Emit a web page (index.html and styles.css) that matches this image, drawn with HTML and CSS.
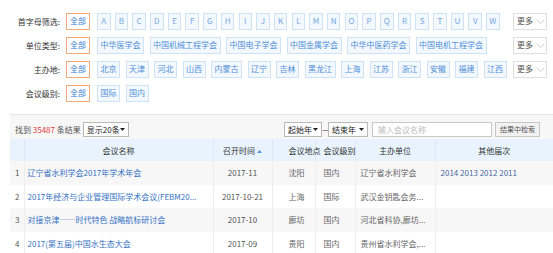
FILE: index.html
```html
<!DOCTYPE html>
<html lang="zh-CN">
<head>
<meta charset="utf-8">
<title>会议检索</title>
<link rel="stylesheet" href="styles.css">
</head>
<body>
<div class="page">
  <div class="filters">
    <div class="frow">
      <span class="flabel">首字母筛选:</span>
      <div class="opts letters">
        <span class="opt all">全部</span>
        <span class="opt ltr">A</span><span class="opt ltr">B</span><span class="opt ltr">C</span><span class="opt ltr">D</span><span class="opt ltr">E</span><span class="opt ltr">F</span><span class="opt ltr">G</span><span class="opt ltr">H</span><span class="opt ltr">I</span><span class="opt ltr">J</span><span class="opt ltr">K</span><span class="opt ltr">L</span><span class="opt ltr">M</span><span class="opt ltr">N</span><span class="opt ltr">O</span><span class="opt ltr">P</span><span class="opt ltr">Q</span><span class="opt ltr">R</span><span class="opt ltr">S</span><span class="opt ltr">T</span><span class="opt ltr">U</span><span class="opt ltr">V</span><span class="opt ltr">W</span>
      </div>
      <span class="more">更多<svg class="chev" width="9" height="5" viewBox="0 0 9 5"><polyline points="0.5,0.5 4.5,4.5 8.5,0.5" fill="none" stroke="#c4c4c4" stroke-width="0.9"/></svg></span>
    </div>
    <div class="frow">
      <span class="flabel">单位类型:</span>
      <div class="opts">
        <span class="opt all">全部</span>
        <span class="opt">中华医学会</span>
        <span class="opt">中国机械工程学会</span>
        <span class="opt">中国电子学会</span>
        <span class="opt">中国金属学会</span>
        <span class="opt">中华中医药学会</span>
        <span class="opt">中国电机工程学会</span>
      </div>
      <span class="more">更多<svg class="chev" width="9" height="5" viewBox="0 0 9 5"><polyline points="0.5,0.5 4.5,4.5 8.5,0.5" fill="none" stroke="#c4c4c4" stroke-width="0.9"/></svg></span>
    </div>
    <div class="frow">
      <span class="flabel">主办地:</span>
      <div class="opts">
        <span class="opt all">全部</span>
        <span class="opt">北京</span><span class="opt">天津</span><span class="opt">河北</span><span class="opt">山西</span><span class="opt">内蒙古</span><span class="opt">辽宁</span><span class="opt">吉林</span><span class="opt">黑龙江</span><span class="opt">上海</span><span class="opt">江苏</span><span class="opt">浙江</span><span class="opt">安徽</span><span class="opt">福建</span><span class="opt">江西</span>
      </div>
      <span class="more">更多<svg class="chev" width="9" height="5" viewBox="0 0 9 5"><polyline points="0.5,0.5 4.5,4.5 8.5,0.5" fill="none" stroke="#c4c4c4" stroke-width="0.9"/></svg></span>
    </div>
    <div class="frow">
      <span class="flabel">会议级别:</span>
      <div class="opts">
        <span class="opt all">全部</span>
        <span class="opt">国际</span><span class="opt">国内</span>
      </div>
    </div>
  </div>

  <div class="bar">
    <span class="found">找到 <em class="num">35487</em> 条结果</span>
    <span class="sel sel-page">显示20条<svg class="caret" width="5" height="3" viewBox="0 0 5 3"><polygon points="0,0 5,0 2.5,3" fill="#222"/></svg></span>
    <div class="search">
      <span class="sel sel-year">起始年<svg class="caret" width="5" height="3" viewBox="0 0 5 3"><polygon points="0,0 5,0 2.5,3" fill="#222"/></svg></span>
      <span class="dash">—</span>
      <span class="sel sel-year2">结束年<svg class="caret" width="5" height="3" viewBox="0 0 5 3"><polygon points="0,0 5,0 2.5,3" fill="#222"/></svg></span>
      <span class="input">输入会议名称</span>
      <span class="btn">结果中检索</span>
    </div>
  </div>

  <table class="results">
    <colgroup>
      <col class="c-no"><col class="c-name"><col class="c-date"><col class="c-place"><col class="c-level"><col class="c-org"><col class="c-other">
    </colgroup>
    <thead>
      <tr>
        <th></th>
        <th class="center">会议名称</th>
        <th class="center">召开时间 <svg class="sort" width="5" height="3" viewBox="0 0 5 3"><polygon points="0,3 5,3 2.5,0" fill="#4f94dd"/></svg></th>
        <th class="place">会议地点</th>
        <th class="level">会议级别</th>
        <th class="center">主办单位</th>
        <th class="center">其他届次</th>
      </tr>
    </thead>
    <tbody>
      <tr>
        <td class="no">1</td>
        <td class="name"><a>辽宁省水利学会2017年学术年会</a></td>
        <td class="date">2017-11</td>
        <td class="place">沈阳</td>
        <td class="level">国内</td>
        <td class="org">辽宁省水利学会</td>
        <td class="other"><a>2014</a> <a>2013</a> <a>2012</a> <a>2011</a></td>
      </tr>
      <tr>
        <td class="no">2</td>
        <td class="name"><a>2017年经济与企业管理国际学术会议(FEBM20...</a></td>
        <td class="date">2017-10-21</td>
        <td class="place">上海</td>
        <td class="level">国际</td>
        <td class="org">武汉金钥匙会务...</td>
        <td class="other"></td>
      </tr>
      <tr>
        <td class="no">3</td>
        <td class="name"><a>对接京津——时代特色 战略航标研讨会</a></td>
        <td class="date">2017-10</td>
        <td class="place">廊坊</td>
        <td class="level">国内</td>
        <td class="org">河北省科协,廊坊...</td>
        <td class="other"></td>
      </tr>
      <tr>
        <td class="no">4</td>
        <td class="name"><a>2017(第五届)中国水生态大会</a></td>
        <td class="date">2017-09</td>
        <td class="place">贵阳</td>
        <td class="level">国内</td>
        <td class="org">贵州省水利学会,...</td>
        <td class="other"></td>
      </tr>
    </tbody>
  </table>
</div>
</body>
</html>
```

FILE: styles.css
```css
html, body {
  margin: 0;
  padding: 0;
  background: #fff;
}
body {
  width: 553px;
  height: 253px;
  overflow: hidden;
  font-family: "Noto Sans CJK SC", "Noto Sans", sans-serif;
  font-size: 8px;
  color: #333;
}
.page {
  padding-left: 10px;
}

/* filters */
.filters {
  padding: 9px 0;
  border-bottom: 1px solid #e6e6e6;
}
.frow {
  display: flex;
  align-items: center;
  height: 24px;
}
.flabel {
  width: 56px;
  box-sizing: border-box;
  padding-right: 6px;
  text-align: right;
  color: #333;
  white-space: nowrap;
}
.opts {
  display: flex;
  align-items: center;
}
.opt {
  height: 17px;
  box-sizing: border-box;
  border: 1px solid #cfe3f6;
  background: #f2f8fe;
  color: #4f8fd8;
  padding: 0 2.5px;
  margin-right: 5.5px;
  display: flex;
  align-items: center;
  justify-content: center;
  white-space: nowrap;
  line-height: 1;
}
.opt.all {
  width: 24px;
  border-color: #f4a878;
  background: #fff;
  color: #3d7fd6;
  margin-right: 7px;
}
.letters .opt.ltr {
  width: 13.5px;
  padding: 0;
  margin-right: 4.2px;
  color: #77a8e0;
}
.more {
  margin-left: auto;
  margin-right: 6px;
  width: 34px;
  height: 17px;
  box-sizing: border-box;
  border: 1px solid #dedede;
  background: #fff;
  color: #555;
  display: flex;
  align-items: center;
  padding-left: 3px;
  gap: 3px;
  line-height: 1;
}
.chev {
  display: block;
}

/* result bar */
.bar {
  display: flex;
  align-items: flex-end;
  height: 24px;
  box-sizing: border-box;
  padding: 0 0 2px 5px;
  background: #f7f7f7;
}
.found {
  color: #555;
  height: 15px;
  display: flex;
  align-items: center;
  white-space: pre;
  margin-right: 2px;
}
.num {
  font-style: normal;
  color: #e23b3b;
}
.sel {
  height: 15px;
  box-sizing: border-box;
  border: 1px solid #b9b9b9;
  background: #fff;
  color: #222;
  display: flex;
  align-items: center;
  justify-content: space-between;
  padding: 0 3px;
  line-height: 1;
  white-space: nowrap;
  flex-shrink: 0;
}
.sel-page {
  width: 46px;
}
.sel-year {
  width: 38px;
}
.sel-year2 {
  width: 40px;
}
.caret {
  display: block;
  flex-shrink: 0;
}
.search {
  margin-left: auto;
  margin-right: 13px;
  display: flex;
  align-items: center;
}
.dash {
  width: 6px;
  text-align: center;
  color: #333;
  line-height: 15px;
  overflow: hidden;
}
.input {
  width: 120px;
  height: 15px;
  box-sizing: border-box;
  border: 1px solid #c8c8c8;
  background: #fff;
  color: #bbb;
  margin-left: 4px;
  padding-left: 5px;
  display: flex;
  align-items: center;
  line-height: 1;
  flex-shrink: 0;
}
.btn {
  width: 45px;
  height: 15px;
  box-sizing: border-box;
  border: 1px solid #c6c6c6;
  background: #f2f2f2;
  color: #555;
  margin-left: 3px;
  font-size: 7px;
  display: flex;
  align-items: center;
  justify-content: center;
  line-height: 1;
  white-space: nowrap;
  flex-shrink: 0;
}

/* table */
.results {
  width: 543px;
  table-layout: fixed;
  border-collapse: collapse;
}
.c-no { width: 14px; }
.c-name { width: 189px; }
.c-date { width: 59px; }
.c-place { width: 43px; }
.c-level { width: 40px; }
.c-org { width: 80px; }
.c-other { width: 118px; }

.results th {
  height: 22px;
  padding: 0;
  background: #e8f3fd;
  font-weight: normal;
  color: #333;
  text-align: left;
  border-right: 1px solid #dbe9f6;
  white-space: nowrap;
}
.results th:last-child {
  border-right: none;
}
.results th.center {
  text-align: center;
}
.sort {
  vertical-align: 1px;
}
.results td {
  height: 23.5px;
  padding: 0;
  color: #666;
  white-space: nowrap;
  overflow: hidden;
  border-right: 1px solid #eeeeee;
}
.results td:last-child {
  border-right: none;
}
.results tbody tr:nth-child(odd) td {
  background: #f7f7f7;
}
.results td.no {
  padding-left: 5px;
  color: #555;
}
.results td.name {
  padding-left: 3px;
}
.results a {
  color: #3571c4;
  text-decoration: none;
}
.results td.date {
  text-align: center;
  color: #555;
}
.results .place {
  padding-left: 16px;
}
.results .level {
  padding-left: 8px;
}
.results td.org {
  padding-left: 5px;
}
.results td.other {
  padding-left: 5px;
}
.results td.other a {
  color: #46679f;
}
```
